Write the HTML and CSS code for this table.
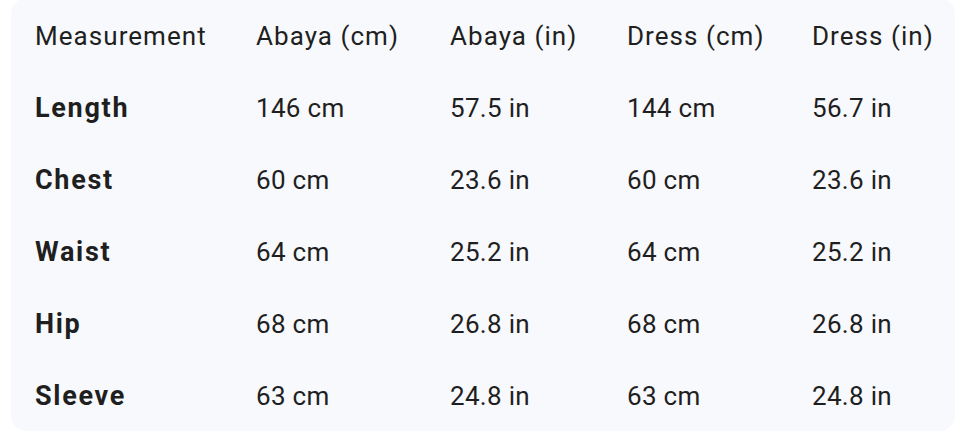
FILE: index.html
```html
<!DOCTYPE html>
<html>
<head>
<meta charset="utf-8">
<link rel="stylesheet" href="styles.css">
</head>
<body>
<div class="card">
  <table class="sizes">
    <colgroup>
      <col class="c1"><col class="c2"><col class="c3"><col class="c4"><col class="c5">
    </colgroup>
    <thead>
      <tr><th>Measurement</th><th>Abaya (cm)</th><th>Abaya (in)</th><th>Dress (cm)</th><th>Dress (in)</th></tr>
    </thead>
    <tbody>
      <tr><td class="label">Length</td><td>146 cm</td><td>57.5 in</td><td>144 cm</td><td>56.7 in</td></tr>
      <tr><td class="label">Chest</td><td>60 cm</td><td>23.6 in</td><td>60 cm</td><td>23.6 in</td></tr>
      <tr><td class="label">Waist</td><td>64 cm</td><td>25.2 in</td><td>64 cm</td><td>25.2 in</td></tr>
      <tr><td class="label">Hip</td><td>68 cm</td><td>26.8 in</td><td>68 cm</td><td>26.8 in</td></tr>
      <tr><td class="label">Sleeve</td><td>63 cm</td><td>24.8 in</td><td>63 cm</td><td>24.8 in</td></tr>
    </tbody>
  </table>
</div>
</body>
</html>
```
FILE: styles.css
```css
html, body {
  margin: 0;
  padding: 0;
  background: #ffffff;
}
body {
  font-family: Roboto, "Noto Sans", Arial, sans-serif;
  color: #1f1f1f;
}
.card {
  margin: -2px 5px 0 11px;
  height: 433px;
  background: #f8f9fc;
  border-radius: 16px;
  padding: 0 0 0 24px;
  box-sizing: border-box;
}
.sizes {
  border-collapse: collapse;
  table-layout: fixed;
  width: 920px;
}
.c1 { width: 221px; }
.c2 { width: 194px; }
.c3 { width: 177px; }
.c4 { width: 185px; }
.c5 { width: 143px; }
.sizes th,
.sizes td {
  padding: 0;
  height: 72px;
  text-align: left;
  font-size: 26px;
  font-weight: 400;
  letter-spacing: 0.3px;
  white-space: nowrap;
  vertical-align: middle;
}
.sizes th {
  letter-spacing: 1.05px;
  padding-top: 2px;
}
.sizes td.label {
  font-size: 27px;
  font-weight: 700;
  letter-spacing: 1.7px;
}
```
